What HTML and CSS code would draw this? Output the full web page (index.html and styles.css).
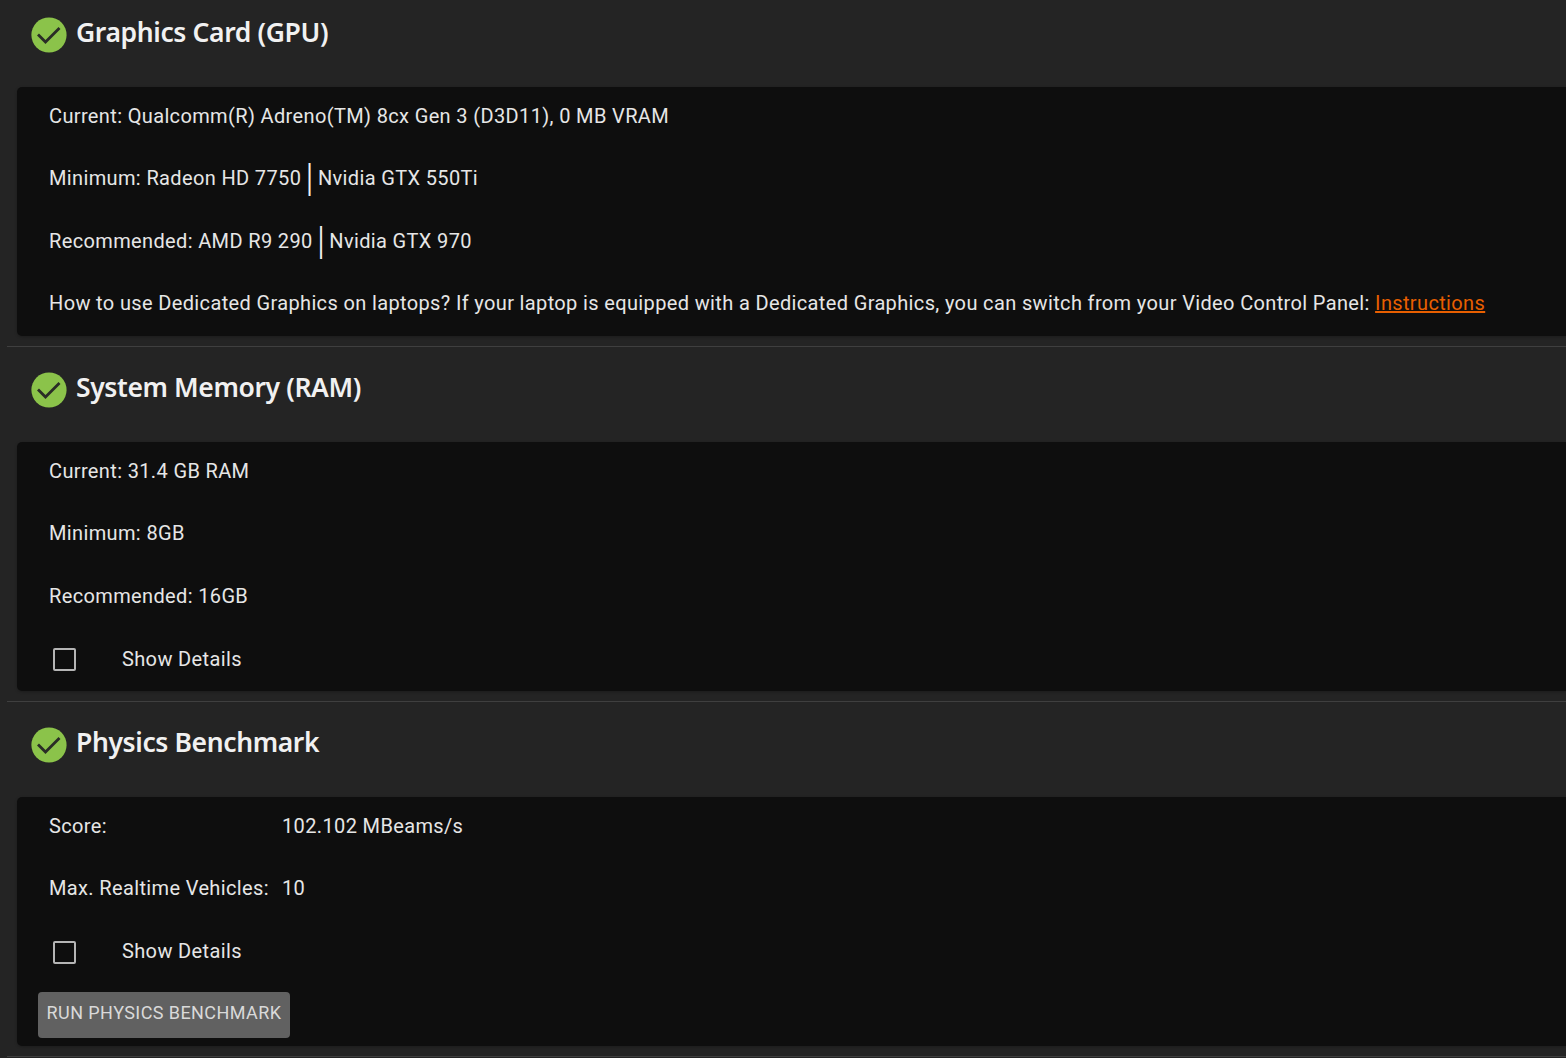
FILE: index.html
```html
<!DOCTYPE html>
<html lang="en">
<head>
<meta charset="utf-8">
<title>System Requirements</title>
<link rel="stylesheet" href="styles.css">
</head>
<body>
<main class="list">
  <section class="section">
    <header class="head">
      <svg class="status" viewBox="0 0 36 36"><circle cx="18" cy="18" r="17.6" fill="#8bc34a"/><path d="M7 17.5l7.5 7.5L28.5 11" fill="none" stroke="#2a2d26" stroke-width="2.8"/></svg>
      <h2 class="title">Graphics Card (GPU)</h2>
    </header>
    <div class="panel">
      <p class="row">Current: Qualcomm(R) Adreno(TM) 8cx Gen 3 (D3D11), 0 MB VRAM</p>
      <p class="row">Minimum: Radeon HD 7750 <span class="bar">|</span> Nvidia GTX 550Ti</p>
      <p class="row">Recommended: AMD R9 290 <span class="bar">|</span> Nvidia GTX 970</p>
      <p class="row">How to use Dedicated Graphics on laptops? If your laptop is equipped with a Dedicated Graphics, you can switch from your Video Control Panel: <a class="link" href="#">Instructions</a></p>
    </div>
  </section>
  <section class="section">
    <header class="head">
      <svg class="status" viewBox="0 0 36 36"><circle cx="18" cy="18" r="17.6" fill="#8bc34a"/><path d="M7 17.5l7.5 7.5L28.5 11" fill="none" stroke="#2a2d26" stroke-width="2.8"/></svg>
      <h2 class="title">System Memory (RAM)</h2>
    </header>
    <div class="panel">
      <p class="row">Current: 31.4 GB RAM</p>
      <p class="row">Minimum: 8GB</p>
      <p class="row">Recommended: 16GB</p>
      <label class="row check"><span class="box"></span>Show Details</label>
    </div>
  </section>
  <section class="section">
    <header class="head">
      <svg class="status" viewBox="0 0 36 36"><circle cx="18" cy="18" r="17.6" fill="#8bc34a"/><path d="M7 17.5l7.5 7.5L28.5 11" fill="none" stroke="#2a2d26" stroke-width="2.8"/></svg>
      <h2 class="title">Physics Benchmark</h2>
    </header>
    <div class="panel">
      <div class="row pair"><span>Score:</span><span>102.102 MBeams/s</span></div>
      <div class="row pair"><span>Max. Realtime Vehicles:</span><span>10</span></div>
      <label class="row check"><span class="box"></span>Show Details</label>
      <div class="actions"><button class="btn" type="button">RUN PHYSICS BENCHMARK</button></div>
    </div>
  </section>
</main>
</body>
</html>
```
FILE: styles.css
```css
* { box-sizing: border-box; }
html, body { margin: 0; height: 100%; overflow: hidden; }
body {
  background: #242424;
  color: #e8e8e8;
  font-family: "Noto Sans", "Open Sans", sans-serif;
}
.list { margin-top: -8px; padding-left: 7px; }
.section { height: 355px; border-bottom: 1px solid #3f3f3f; }
.head {
  height: 95px;
  display: flex;
  align-items: flex-start;
  padding: 25px 0 0 23.5px;
  gap: 9.5px;
}
.status { width: 36px; height: 36px; flex: none; }
.title {
  margin: -5.5px 0 0;
  font-size: 26.5px;
  line-height: 40px;
  font-weight: 600;
  letter-spacing: -0.38px;
  color: #f1f1f1;
}
.panel {
  margin-left: 10px;
  height: 249px;
  background: #0e0e0e;
  border-radius: 5px 0 0 5px;
  box-shadow: 0 1px 3px rgba(0,0,0,.25);
  padding-left: 32px;
}
.row {
  margin: 0;
  height: 62.5px;
  padding-bottom: 5px;
  display: flex;
  align-items: center;
  white-space: pre;
  font-family: Roboto, "Noto Sans", sans-serif;
  font-size: 20px;
  letter-spacing: 0.36px;
  color: #e6e6e6;
}
.bar {
  width: 6px;
  display: flex;
  justify-content: center;
  font-size: 38px;
  font-weight: 300;
  line-height: 20px;
  letter-spacing: 0;
  color: #f0f0f0;
}
.link { color: #e85f00; }
.pair > span:first-child { width: 233px; }
.check { padding-bottom: 4px; }
.box {
  width: 23px;
  height: 23px;
  margin: 2px 46.5px 0 3.5px;
  border: 2px solid #b5b5b5;
  border-radius: 2px;
}
.actions { margin: 7.5px 0 0 -11px; }
.btn {
  display: block;
  width: 252px;
  height: 46px;
  padding: 0 0 5px;
  border: 0;
  border-radius: 4px;
  background: #616161;
  color: #d9d9d9;
  font-family: Roboto, "Noto Sans", sans-serif;
  font-size: 18px;
  letter-spacing: 0.42px;
}
```
